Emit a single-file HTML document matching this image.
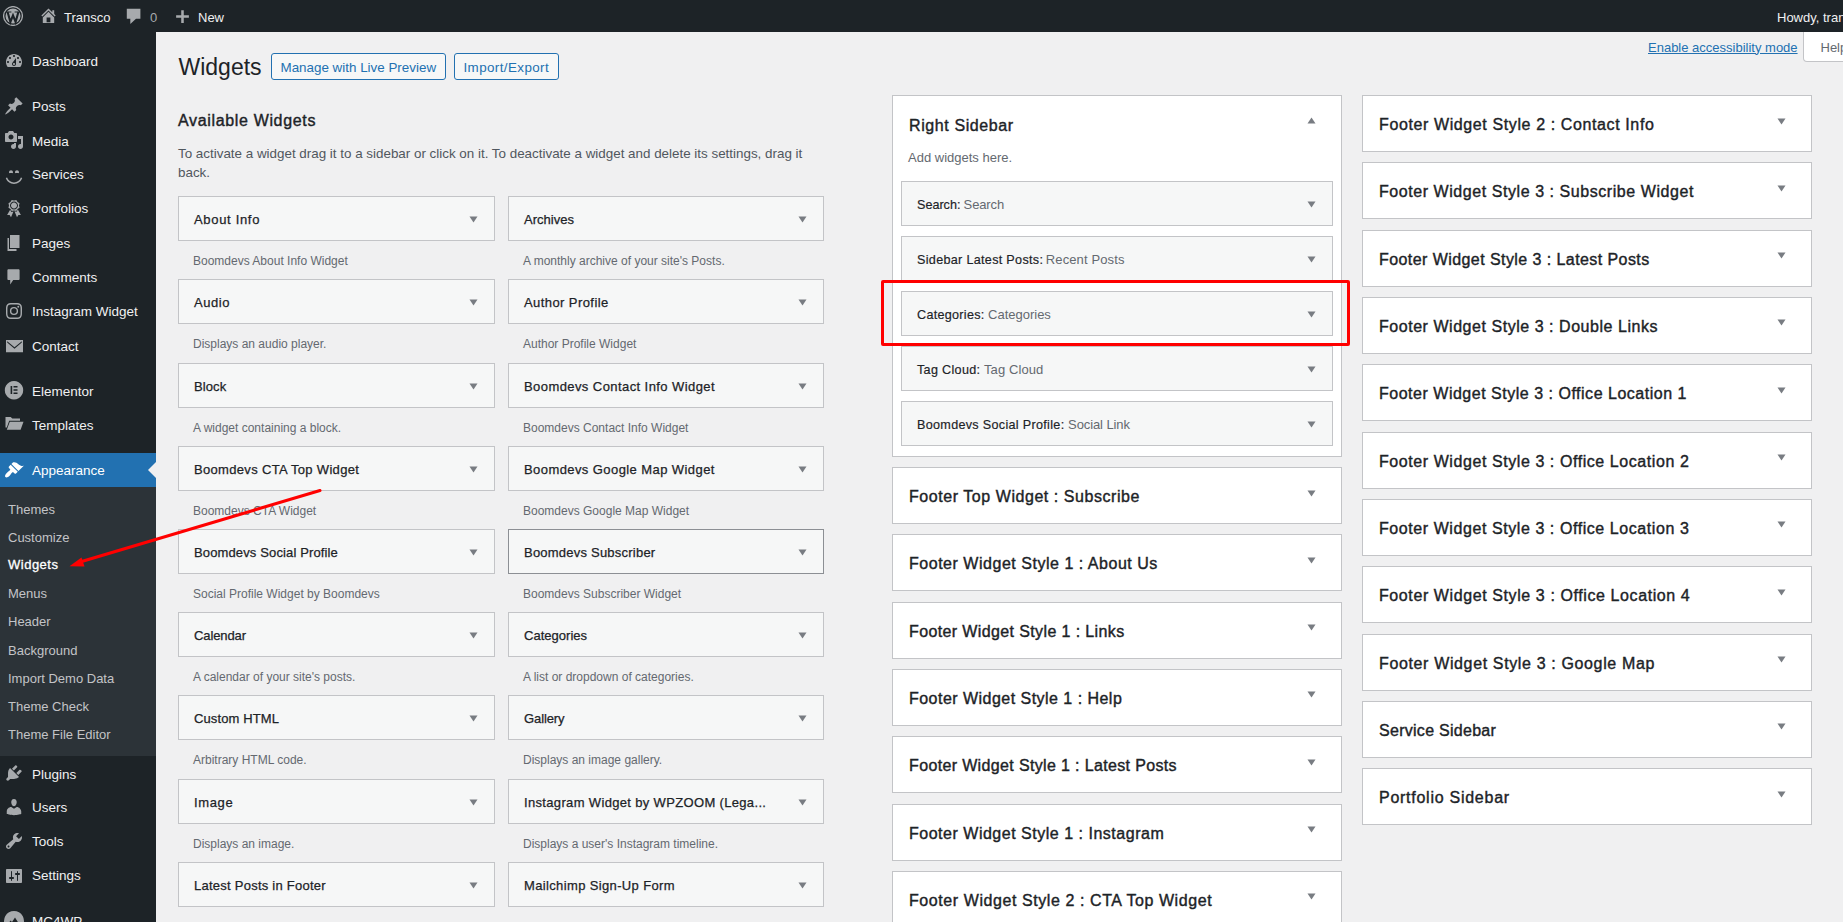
<!DOCTYPE html>
<html><head><meta charset="utf-8"><title>Widgets</title>
<style>
html,body{margin:0;padding:0;}
body{width:1843px;height:922px;overflow:hidden;position:relative;background:#f0f0f1;font-family:'Liberation Sans', sans-serif;}
.t{position:absolute;white-space:nowrap;}
.b{position:absolute;box-sizing:content-box;}
.btn{border:1px solid #2271b1;border-radius:3px;background:#f6f7f7;}
</style></head><body>
<div class="b" style="left:0px;top:0px;width:1843px;height:32px;background:#1d2327;"></div>
<div class="b" style="left:0px;top:32px;width:156px;height:890px;background:#1d2327;"></div>
<div class="b" style="left:0px;top:453px;width:156px;height:34px;background:#2271b1;"></div>
<div class="b" style="left:0px;top:487px;width:156px;height:269px;background:#2c3338;"></div>
<svg class="b" style="left:3px;top:6px" width="20" height="20" viewBox="0 0 20 20"><circle cx="10" cy="10" r="9.4" fill="none" stroke="#a7aaad" stroke-width="1.3"/><circle cx="10" cy="10" r="7.5" fill="#a7aaad"/><polyline points="4.6,6.0 7.4,16.0 10,9.4 12.6,16.0 15.4,6.0" fill="none" stroke="#1d2327" stroke-width="2.1" stroke-linejoin="miter"/><path d="M3.2 5.6 H8.4 V6.4 H3.2Z M11.6 5.6 H16.8 V6.4 H11.6Z" fill="#1d2327"/></svg>
<svg class="b" style="left:38.5px;top:6px" width="19" height="19" viewBox="0 0 20 20" fill="#a7aaad"><path fill-rule="evenodd" d="M16 8.5l1.53 1.53-1.06 1.06L10 4.62l-6.47 6.47-1.06-1.06L10 2.5l4 4v-2h2v4zm-6-2.46l6 5.99V18H4v-5.97zM12 17v-5H8v5h4z"/></svg>
<div class="t" style="left:64.0px;top:11.3px;font-size:13px;line-height:13px;color:#f0f0f1;font-weight:normal;">Transco</div>
<svg class="b" style="left:126px;top:8px" width="16" height="16" viewBox="0 0 20 20" fill="#a7aaad"><path d="M1 1 H18 V13.5 H12.5 L5.4 20 V13.5 H1Z"/></svg>
<div class="t" style="left:150.0px;top:11.3px;font-size:13px;line-height:13px;color:#a7aaad;font-weight:normal;">0</div>
<svg class="b" style="left:175px;top:9px" width="15" height="15" viewBox="0 0 20 20" fill="#a7aaad"><path d="M8.3 1.5 H11.7 V8.3 H18.5 V11.7 H11.7 V18.5 H8.3 V11.7 H1.5 V8.3 H8.3Z"/></svg>
<div class="t" style="left:198.0px;top:11.3px;font-size:13px;line-height:13px;color:#f0f0f1;font-weight:normal;">New</div>
<div class="t" style="left:1777.0px;top:11.3px;font-size:13px;line-height:13px;color:#f0f0f1;font-weight:normal;white-space:nowrap">Howdy, transco</div>
<div class="t" style="left:32.0px;top:55.3px;font-size:13.5px;line-height:13.5px;color:#f0f0f1;font-weight:normal;white-space:nowrap">Dashboard</div>
<div class="t" style="left:32.0px;top:100.4px;font-size:13.5px;line-height:13.5px;color:#f0f0f1;font-weight:normal;white-space:nowrap">Posts</div>
<div class="t" style="left:32.0px;top:134.5px;font-size:13.5px;line-height:13.5px;color:#f0f0f1;font-weight:normal;white-space:nowrap">Media</div>
<div class="t" style="left:32.0px;top:168.3px;font-size:13.5px;line-height:13.5px;color:#f0f0f1;font-weight:normal;white-space:nowrap">Services</div>
<div class="t" style="left:32.0px;top:202.4px;font-size:13.5px;line-height:13.5px;color:#f0f0f1;font-weight:normal;white-space:nowrap">Portfolios</div>
<div class="t" style="left:32.0px;top:236.5px;font-size:13.5px;line-height:13.5px;color:#f0f0f1;font-weight:normal;white-space:nowrap">Pages</div>
<div class="t" style="left:32.0px;top:271.1px;font-size:13.5px;line-height:13.5px;color:#f0f0f1;font-weight:normal;white-space:nowrap">Comments</div>
<div class="t" style="left:32.0px;top:305.3px;font-size:13.5px;line-height:13.5px;color:#f0f0f1;font-weight:normal;white-space:nowrap">Instagram Widget</div>
<div class="t" style="left:32.0px;top:339.6px;font-size:13.5px;line-height:13.5px;color:#f0f0f1;font-weight:normal;white-space:nowrap">Contact</div>
<div class="t" style="left:32.0px;top:384.5px;font-size:13.5px;line-height:13.5px;color:#f0f0f1;font-weight:normal;white-space:nowrap">Elementor</div>
<div class="t" style="left:32.0px;top:419.4px;font-size:13.5px;line-height:13.5px;color:#f0f0f1;font-weight:normal;white-space:nowrap">Templates</div>
<div class="t" style="left:32.0px;top:464.2px;font-size:13.5px;line-height:13.5px;color:#ffffff;font-weight:normal;white-space:nowrap">Appearance</div>
<div class="t" style="left:32.0px;top:767.5px;font-size:13.5px;line-height:13.5px;color:#f0f0f1;font-weight:normal;white-space:nowrap">Plugins</div>
<div class="t" style="left:32.0px;top:801.1px;font-size:13.5px;line-height:13.5px;color:#f0f0f1;font-weight:normal;white-space:nowrap">Users</div>
<div class="t" style="left:32.0px;top:835.2px;font-size:13.5px;line-height:13.5px;color:#f0f0f1;font-weight:normal;white-space:nowrap">Tools</div>
<div class="t" style="left:32.0px;top:869.1px;font-size:13.5px;line-height:13.5px;color:#f0f0f1;font-weight:normal;white-space:nowrap">Settings</div>
<div class="t" style="left:32.0px;top:914.6px;font-size:13.5px;line-height:13.5px;color:#f0f0f1;font-weight:normal;white-space:nowrap">MC4WP</div>
<div class="t" style="left:8.0px;top:502.7px;font-size:13px;line-height:13px;color:#c3c4c7;font-weight:normal;white-space:nowrap">Themes</div>
<div class="t" style="left:8.0px;top:530.5px;font-size:13px;line-height:13px;color:#c3c4c7;font-weight:normal;white-space:nowrap">Customize</div>
<div class="t" style="left:8.0px;top:558.4px;font-size:13px;line-height:13px;color:#ffffff;font-weight:normal;-webkit-text-stroke:0.3px #fff;letter-spacing:0.5px;">Widgets</div>
<div class="t" style="left:8.0px;top:587.3px;font-size:13px;line-height:13px;color:#c3c4c7;font-weight:normal;white-space:nowrap">Menus</div>
<div class="t" style="left:8.0px;top:615.0px;font-size:13px;line-height:13px;color:#c3c4c7;font-weight:normal;white-space:nowrap">Header</div>
<div class="t" style="left:8.0px;top:643.7px;font-size:13px;line-height:13px;color:#c3c4c7;font-weight:normal;white-space:nowrap">Background</div>
<div class="t" style="left:8.0px;top:671.9px;font-size:13px;line-height:13px;color:#c3c4c7;font-weight:normal;white-space:nowrap">Import Demo Data</div>
<div class="t" style="left:8.0px;top:699.6px;font-size:13px;line-height:13px;color:#c3c4c7;font-weight:normal;white-space:nowrap">Theme Check</div>
<div class="t" style="left:8.0px;top:728.4px;font-size:13px;line-height:13px;color:#c3c4c7;font-weight:normal;white-space:nowrap">Theme File Editor</div>
<svg class="b" style="left:148px;top:462px" width="8" height="16" viewBox="0 0 8 16"><path d="M8 0 L0 8 L8 16Z" fill="#f0f0f1"/></svg>
<svg class="b" style="left:4px;top:51px" width="20" height="20" viewBox="0 0 20 20"><path fill="#a7aaad" fill-rule="evenodd" d="M3.76 16h12.48c1.1-1.37 1.76-3.11 1.76-5 0-4.42-3.58-8-8-8s-8 3.58-8 8c0 1.89.66 3.630 1.76 5zM10 4c.55 0 1 .45 1 1s-.45 1-1 1-1-.45-1-1 .45-1 1-1zM6 6c.55 0 1 .45 1 1s-.45 1-1 1-1-.45-1-1 .45-1 1-1zm8 0c.55 0 1 .45 1 1s-.45 1-1 1-1-.45-1-1 .45-1 1-1zm-5.37 5.55L12 7v6c0 1.1-.9 2-2 2s-2-.9-2-2c0-.57.24-1.08.63-1.45zM4 10c.55 0 1 .45 1 1s-.45 1-1 1-1-.45-1-1 .45-1 1-1zm12 0c.55 0 1 .45 1 1s-.45 1-1 1-1-.45-1-1 .45-1 1-1zm-5 3c0-.55-.45-1-1-1s-1 .45-1 1 .45 1 1 1 1-.45 1-1z"/></svg>
<svg class="b" style="left:4px;top:96px" width="20" height="20" viewBox="0 0 20 20"><path fill="#a7aaad" d="M10.44 3.02l1.82-1.82 6.36 6.35-1.830 1.82c-1.05-.68-2.48-.57-3.41.36l-.75.75c-.92.93-1.04 2.35-.35 3.41l-1.83 1.82-2.41-2.41-2.8 2.79c-.42.42-3.38 2.71-3.8 2.29s1.86-3.39 2.28-3.81l2.79-2.79L4.1 9.36l1.83-1.82c1.05.69 2.48.57 3.4-.36l.75-.75c.93-.92 1.05-2.35.36-3.41z"/></svg>
<svg class="b" style="left:4px;top:130px" width="20" height="20" viewBox="0 0 20 20"><path fill="#a7aaad" fill-rule="evenodd" d="M13 11V4c0-.55-.45-1-1-1h-1.67L9 1H5L3.67 3H2c-.55 0-1 .45-1 1v7c0 .55.45 1 1 1h10c.55 0 1-.45 1-1zM7 4.5c1.38 0 2.5 1.12 2.5 2.5S8.38 9.5 7 9.5 4.5 8.38 4.5 7 5.62 4.5 7 4.5zM14 6h5v10.5c0 1.38-1.12 2.5-2.5 2.5S14 17.880 14 16.5s1.12-2.5 2.5-2.5c.17 0 .34.02.5.05V9h-3V6zm-4 8.05V13h2v3.5c0 1.38-1.12 2.5-2.5 2.5S7 17.88 7 16.5 8.12 14 9.5 14c.17 0 .34.02.5.05z"/></svg>
<svg class="b" style="left:4px;top:165px" width="20" height="20" viewBox="0 0 20 20"><path fill="#a7aaad" d="M7 5.2c1.1 0 2 .89 2 2 0 .37-.11.71-.28 1C8.72 8.2 8 8 7 8s-1.72.2-1.72.2c-.17-.29-.28-.63-.28-1 0-1.110.9-2 2-2zm6 0c1.11 0 2 .89 2 2 0 .37-.11.71-.28 1 0 0-.72-.2-1.72-.2s-1.72.2-1.72.2c-.17-.29-.28-.63-.28-1 0-1.11.89-2 2-2zm-3 13.7c3.72 0 7.03-2.36 8.23-5.88l-1.32-.46C15.9 15.52 13.12 17.5 10 17.5s-5.9-1.98-6.91-4.94l-1.32.46c1.2 3.52 4.51 5.88 8.23 5.88z"/></svg>
<svg class="b" style="left:4px;top:198px" width="20" height="20" viewBox="0 0 20 20"><path fill="#a7aaad" fill-rule="evenodd" d="M4.46 5.16L5 7.46l-.54 2.29 2.01 1.24L7.7 13l2.3-.54 2.3.54 1.23-2.01 2.01-1.24L15 7.46l.54-2.3-2-1.24-1.24-2.01-2.3.55-2.29-.54-1.25 2zm5.55 6.34c-2.21 0-4.01-1.79-4.01-4 0-2.2 1.8-4 4.01-4 2.2 0 4 1.8 4 4 0 2.21-1.8 4-4 4zm-.02-1C8.33 10.5 7 9.16 7 7.5c0-1.65 1.33-3 2.99-3S13 5.85 13 7.5c0 1.66-1.35 3-3.01 3zm3.84 1.1l-1.28 2.24-2.08-.47L13 19.2l1.4-2.2h2.5zm-7.7.07l1.25 2.25 2.13-.51L7 19.2 5.6 17H3.1z"/></svg>
<svg class="b" style="left:3px;top:232.5px" width="20" height="20" viewBox="0 0 20 20"><path fill="#a7aaad" d="M7 15V2h9.5v13H7zm-1 1h7.5v2H4.5V5H6v11z"/></svg>
<svg class="b" style="left:4px;top:267px" width="20" height="20" viewBox="0 0 20 20"><path fill="#a7aaad" d="M4.5 2.2h10c.6 0 1.1.5 1.1 1.1v8.6c0 .6-.5 1.1-1.1 1.1H9.2L6.2 17.6V13H4.5c-.6 0-1.1-.5-1.1-1.1V3.3c0-.6.5-1.1 1.1-1.1z"/></svg>
<svg class="b" style="left:4px;top:301px" width="20" height="20" viewBox="0 0 20 20"><path fill="#a7aaad" d="M12.67 10A2.67 2.67 0 1 0 10 12.67 2.68 2.68 0 0 0 12.67 10zm1.43 0A4.1 4.1 0 1 1 10 5.9a4.09 4.09 0 0 1 4.1 4.1zm1.13-4.27a.96.96 0 1 1-1-1 1 1 0 0 1 1 1zM10 3.44c-1.17 0-3.67-.1-4.72.32a2.67 2.67 0 0 0-1.52 1.520c-.42 1-.32 3.55-.32 4.72s-.1 3.67.32 4.72a2.74 2.74 0 0 0 1.52 1.52c1 .42 3.55.32 4.72.32s3.67.1 4.72-.32a2.83 2.83 0 0 0 1.52-1.52c.42-1.05.32-3.55.32-4.72s.1-3.67-.32-4.72a2.74 2.74 0 0 0-1.52-1.52c-1.05-.42-3.55-.32-4.72-.32zM18 10c0 1.1 0 2.2-.05 3.3a4.84 4.84 0 0 1-1.29 3.36A4.8 4.8 0 0 1 13.3 18H6.7a4.84 4.84 0 0 1-3.36-1.29 4.84 4.84 0 0 1-1.29-3.36C2 12.2 2 11.1 2 10V6.7a4.84 4.84 0 0 1 1.34-3.36A4.8 4.8 0 0 1 6.7 2.05C7.8 2 8.9 2 10 2h3.3a4.84 4.84 0 0 1 3.36 1.29A4.8 4.8 0 0 1 18 6.7V10z"/></svg>
<svg class="b" style="left:4px;top:336px" width="20" height="20" viewBox="0 0 20 20"><path fill="#a7aaad" fill-rule="evenodd" d="M2 4h17v12.3H2z M3.2 5.2 L10.5 11.2 L17.8 5.2 L17.8 6.6 L10.5 12.8 L3.2 6.6Z"/></svg>
<svg class="b" style="left:4px;top:380px" width="20" height="20" viewBox="0 0 20 20"><path fill="#a7aaad" fill-rule="evenodd" d="M10 1a9.2 9.2 0 1 0 0.001 0z M6.6 5.9h1.6v8.2H6.6z M9.5 5.9h4v1.6h-4z M9.5 9.2h4v1.6h-4z M9.5 12.5h4v1.6h-4z"/></svg>
<svg class="b" style="left:4px;top:412px" width="20" height="20" viewBox="0 0 20 20"><path fill="#a7aaad" d="M1.5 5h5.2l1.6 1.6H16v2.2H5.2L2.8 15.5H1.5z M5.8 9.7H19.5L16.6 17.8H2.8z"/></svg>
<svg class="b" style="left:4px;top:460px" width="20" height="20" viewBox="0 0 20 20"><path fill="#ffffff" d="M14.48 11.06L7.41 3.99l1.5-1.5c.5-.56 2.3-.47 3.51.32 1.21.8 1.43 1.28 2.91 2.1 1.18.64 2.45 1.26 4.45.85zm-.71.71L6.7 4.7 4.93 6.47c-.39.39-.39 1.02 0 1.41l1.06 1.06c.39.39.39 1.03 0 1.42-.6.6-1.43 1.11-2.21 1.690-.35.26-.7.53-1.01.84C1.43 14.230.4 16.08 1.4 17.070c.99 1 2.84-.03 4.18-1.36.31-.31.58-.66.85-1.02.57-.78 1.08-1.61 1.69-2.21.39-.39 1.02-.39 1.41 0l1.06 1.06c.39.39 1.02.39 1.41 0z"/></svg>
<svg class="b" style="left:4px;top:763px" width="20" height="20" viewBox="0 0 20 20"><path fill="#a7aaad" d="M13.11 4.36L9.87 7.6 8 5.73l3.24-3.24c.35-.34 1.05-.2 1.56.32.52.51.66 1.21.31 1.55zm-8 1.77l.91-1.12 9.01 9.01-1.19.84c-.71.71-2.63 1.16-3.82 1.16H6.14L4.9 17.26c-.59.59-1.54.59-2.12 0-.59-.58-.59-1.53 0-2.12l1.24-1.24v-3.88c0-1.13.4-3.19 1.09-3.89zm7.26 3.97l3.24-3.24c.34-.35 1.04-.21 1.55.31.52.51.66 1.21.31 1.55l-3.24 3.25z"/></svg>
<svg class="b" style="left:4px;top:797px" width="20" height="20" viewBox="0 0 20 20"><path fill="#a7aaad" d="M10 9.25c-2.27 0-2.73-3.44-2.73-3.44C7 4.02 7.82 2 9.97 2c2.16 0 2.98 2.02 2.71 3.81 0 0-.41 3.44-2.68 3.44zm0 2.57L12.72 10c2.39 0 4.52 2.33 4.52 4.53v2.49s-3.65 1.13-7.24 1.13c-3.65 0-7.24-1.13-7.24-1.13v-2.49c0-2.25 1.94-4.48 4.47-4.48z"/></svg>
<svg class="b" style="left:4px;top:831px" width="20" height="20" viewBox="0 0 20 20"><path fill="#a7aaad" fill-rule="evenodd" d="M16.68 9.77c-1.34 1.34-3.3 1.67-4.95.99l-5.41 6.52c-.99.99-2.59.99-3.58 0s-.99-2.59 0-3.57l6.52-5.42c-.68-1.65-.35-3.61.99-4.95 1.28-1.28 3.12-1.62 4.72-1.06l-2.89 2.89 2.82 2.82 2.86-2.87c.53 1.58.18 3.39-1.08 4.65zM3.81 16.21c.4.39 1.04.39 1.43 0 .4-.4.4-1.04 0-1.43-.39-.4-1.03-.4-1.43 0-.39.39-.39 1.03 0 1.43z"/></svg>
<svg class="b" style="left:4px;top:866px" width="20" height="20" viewBox="0 0 20 20"><path fill="#a7aaad" fill-rule="evenodd" d="M18 16V4c0-.55-.45-1-1-1H3c-.55 0-1 .45-1 1v12c0 .55.45 1 1 1h14c.55 0 1-.45 1-1zM8 11h1c.55 0 1 .45 1 1s-.45 1-1 1H8v1.5c0 .28-.22.5-.5.5s-.5-.22-.5-.5V13H6c-.55 0-1-.45-1-1s.45-1 1-1h1V5.5c0-.28.22-.5.5-.5s.5.22.5.5V11zm5-2h-1c-.55 0-1-.45-1-1s.45-1 1-1h1V5.5c0-.28.22-.5.5-.5s.5.22.5.5V7h1c.55 0 1 .45 1 1s-.45 1-1 1h-1v5.5c0 .28-.22.5-.5.5s-.5-.22-.5-.5V9z"/></svg>
<svg class="b" style="left:3.5px;top:910.5px" width="20" height="20" viewBox="0 0 20 20"><path fill="#a7aaad" fill-rule="evenodd" d="M10 0a10 10 0 1 0 0.001 0z M4.5 12.5 L6.5 9.5 L8 11 L11 6.5 L14.5 12 L14.5 17 L4.5 17Z"/></svg>
<div class="t" style="left:178.5px;top:55.7px;font-size:23px;line-height:23px;color:#1d2327;font-weight:normal;">Widgets</div>
<div class="b btn" style="left:271px;top:53px;width:173px;height:25px;"></div>
<div class="t" style="left:280.5px;top:60.7px;font-size:13.4px;line-height:13.4px;color:#2271b1;font-weight:normal;white-space:nowrap">Manage with Live Preview</div>
<div class="b btn" style="left:454px;top:53px;width:103px;height:25px;"></div>
<div class="t" style="left:463.5px;top:60.7px;font-size:13.4px;line-height:13.4px;color:#2271b1;font-weight:normal;letter-spacing:0.4px;">Import/Export</div>
<div class="t" style="left:1648.0px;top:40.5px;font-size:13px;line-height:13px;color:#2271b1;font-weight:normal;white-space:nowrap;text-decoration:underline">Enable accessibility mode</div>
<div class="b" style="left:1803px;top:32px;width:60px;height:29px;background:#fff;border:1px solid #c3c4c7;border-top:none;border-radius:0 0 0 4px"></div>
<div class="t" style="left:1820.5px;top:40.5px;font-size:13px;line-height:13px;color:#646970;font-weight:normal;">Help</div>
<div class="t" style="left:178.0px;top:113.0px;font-size:16px;line-height:16px;color:#1d2327;font-weight:normal;-webkit-text-stroke:0.4px #1d2327;letter-spacing:0.656px;">Available Widgets</div>
<div class="t" style="left:178.0px;top:146.5px;font-size:13.4px;line-height:13.4px;color:#50575e;font-weight:normal;white-space:nowrap">To activate a widget drag it to a sidebar or click on it. To deactivate a widget and delete its settings, drag it</div>
<div class="t" style="left:178.0px;top:165.5px;font-size:13.4px;line-height:13.4px;color:#50575e;font-weight:normal;">back.</div>
<div class="b" style="left:178px;top:196px;width:315px;height:43px;background:#f6f7f7;border:1px solid #c3c4c7;"></div>
<div class="t" style="left:194.0px;top:213.3px;font-size:13px;line-height:13px;color:#1d2327;font-weight:normal;-webkit-text-stroke:0.25px #1d2327;letter-spacing:0.678px;">About Info</div>
<svg class="b" style="left:468.5px;top:215.5px" width="9" height="7" viewBox="0 0 9 7"><path d="M0.5 0.5H8.5L4.5 6.5Z" fill="#787c82"/></svg>
<div class="t" style="left:193.0px;top:255.0px;font-size:12px;line-height:12px;color:#646970;font-weight:normal;white-space:nowrap">Boomdevs About Info Widget</div>
<div class="b" style="left:178px;top:279px;width:315px;height:43px;background:#f6f7f7;border:1px solid #c3c4c7;"></div>
<div class="t" style="left:194.0px;top:296.3px;font-size:13px;line-height:13px;color:#1d2327;font-weight:normal;-webkit-text-stroke:0.25px #1d2327;letter-spacing:0.575px;">Audio</div>
<svg class="b" style="left:468.5px;top:298.5px" width="9" height="7" viewBox="0 0 9 7"><path d="M0.5 0.5H8.5L4.5 6.5Z" fill="#787c82"/></svg>
<div class="t" style="left:193.0px;top:338.0px;font-size:12px;line-height:12px;color:#646970;font-weight:normal;white-space:nowrap">Displays an audio player.</div>
<div class="b" style="left:178px;top:363px;width:315px;height:43px;background:#f6f7f7;border:1px solid #c3c4c7;"></div>
<div class="t" style="left:194.0px;top:380.3px;font-size:13px;line-height:13px;color:#1d2327;font-weight:normal;-webkit-text-stroke:0.25px #1d2327;letter-spacing:0.1px;">Block</div>
<svg class="b" style="left:468.5px;top:382.5px" width="9" height="7" viewBox="0 0 9 7"><path d="M0.5 0.5H8.5L4.5 6.5Z" fill="#787c82"/></svg>
<div class="t" style="left:193.0px;top:422.0px;font-size:12px;line-height:12px;color:#646970;font-weight:normal;white-space:nowrap">A widget containing a block.</div>
<div class="b" style="left:178px;top:446px;width:315px;height:43px;background:#f6f7f7;border:1px solid #c3c4c7;"></div>
<div class="t" style="left:194.0px;top:463.3px;font-size:13px;line-height:13px;color:#1d2327;font-weight:normal;-webkit-text-stroke:0.25px #1d2327;letter-spacing:0.323px;">Boomdevs CTA Top Widget</div>
<svg class="b" style="left:468.5px;top:465.5px" width="9" height="7" viewBox="0 0 9 7"><path d="M0.5 0.5H8.5L4.5 6.5Z" fill="#787c82"/></svg>
<div class="t" style="left:193.0px;top:505.0px;font-size:12px;line-height:12px;color:#646970;font-weight:normal;white-space:nowrap">Boomdevs CTA Widget</div>
<div class="b" style="left:178px;top:529px;width:315px;height:43px;background:#f6f7f7;border:1px solid #c3c4c7;"></div>
<div class="t" style="left:194.0px;top:546.3px;font-size:13px;line-height:13px;color:#1d2327;font-weight:normal;-webkit-text-stroke:0.25px #1d2327;letter-spacing:0.132px;">Boomdevs Social Profile</div>
<svg class="b" style="left:468.5px;top:548.5px" width="9" height="7" viewBox="0 0 9 7"><path d="M0.5 0.5H8.5L4.5 6.5Z" fill="#787c82"/></svg>
<div class="t" style="left:193.0px;top:588.0px;font-size:12px;line-height:12px;color:#646970;font-weight:normal;white-space:nowrap">Social Profile Widget by Boomdevs</div>
<div class="b" style="left:178px;top:612px;width:315px;height:43px;background:#f6f7f7;border:1px solid #c3c4c7;"></div>
<div class="t" style="left:194.0px;top:629.3px;font-size:13px;line-height:13px;color:#1d2327;font-weight:normal;-webkit-text-stroke:0.25px #1d2327;letter-spacing:-0.1px;">Calendar</div>
<svg class="b" style="left:468.5px;top:631.5px" width="9" height="7" viewBox="0 0 9 7"><path d="M0.5 0.5H8.5L4.5 6.5Z" fill="#787c82"/></svg>
<div class="t" style="left:193.0px;top:671.0px;font-size:12px;line-height:12px;color:#646970;font-weight:normal;white-space:nowrap">A calendar of your site&#39;s posts.</div>
<div class="b" style="left:178px;top:695px;width:315px;height:43px;background:#f6f7f7;border:1px solid #c3c4c7;"></div>
<div class="t" style="left:194.0px;top:712.3px;font-size:13px;line-height:13px;color:#1d2327;font-weight:normal;-webkit-text-stroke:0.25px #1d2327;letter-spacing:0.11px;">Custom HTML</div>
<svg class="b" style="left:468.5px;top:714.5px" width="9" height="7" viewBox="0 0 9 7"><path d="M0.5 0.5H8.5L4.5 6.5Z" fill="#787c82"/></svg>
<div class="t" style="left:193.0px;top:754.0px;font-size:12px;line-height:12px;color:#646970;font-weight:normal;white-space:nowrap">Arbitrary HTML code.</div>
<div class="b" style="left:178px;top:779px;width:315px;height:43px;background:#f6f7f7;border:1px solid #c3c4c7;"></div>
<div class="t" style="left:194.0px;top:796.3px;font-size:13px;line-height:13px;color:#1d2327;font-weight:normal;-webkit-text-stroke:0.25px #1d2327;letter-spacing:0.625px;">Image</div>
<svg class="b" style="left:468.5px;top:798.5px" width="9" height="7" viewBox="0 0 9 7"><path d="M0.5 0.5H8.5L4.5 6.5Z" fill="#787c82"/></svg>
<div class="t" style="left:193.0px;top:838.0px;font-size:12px;line-height:12px;color:#646970;font-weight:normal;white-space:nowrap">Displays an image.</div>
<div class="b" style="left:178px;top:862px;width:315px;height:43px;background:#f6f7f7;border:1px solid #c3c4c7;"></div>
<div class="t" style="left:194.0px;top:879.3px;font-size:13px;line-height:13px;color:#1d2327;font-weight:normal;-webkit-text-stroke:0.25px #1d2327;letter-spacing:0.248px;">Latest Posts in Footer</div>
<svg class="b" style="left:468.5px;top:881.5px" width="9" height="7" viewBox="0 0 9 7"><path d="M0.5 0.5H8.5L4.5 6.5Z" fill="#787c82"/></svg>
<div class="t" style="left:193.0px;top:921.0px;font-size:12px;line-height:12px;color:#646970;font-weight:normal;white-space:nowrap">Displays latest posts in footer.</div>
<div class="b" style="left:508px;top:196px;width:314px;height:43px;background:#f6f7f7;border:1px solid #c3c4c7;"></div>
<div class="t" style="left:524.0px;top:213.3px;font-size:13px;line-height:13px;color:#1d2327;font-weight:normal;-webkit-text-stroke:0.25px #1d2327;letter-spacing:0.029px;">Archives</div>
<svg class="b" style="left:797.5px;top:215.5px" width="9" height="7" viewBox="0 0 9 7"><path d="M0.5 0.5H8.5L4.5 6.5Z" fill="#787c82"/></svg>
<div class="t" style="left:523.0px;top:255.0px;font-size:12px;line-height:12px;color:#646970;font-weight:normal;white-space:nowrap">A monthly archive of your site&#39;s Posts.</div>
<div class="b" style="left:508px;top:279px;width:314px;height:43px;background:#f6f7f7;border:1px solid #c3c4c7;"></div>
<div class="t" style="left:524.0px;top:296.3px;font-size:13px;line-height:13px;color:#1d2327;font-weight:normal;-webkit-text-stroke:0.25px #1d2327;letter-spacing:0.423px;">Author Profile</div>
<svg class="b" style="left:797.5px;top:298.5px" width="9" height="7" viewBox="0 0 9 7"><path d="M0.5 0.5H8.5L4.5 6.5Z" fill="#787c82"/></svg>
<div class="t" style="left:523.0px;top:338.0px;font-size:12px;line-height:12px;color:#646970;font-weight:normal;white-space:nowrap">Author Profile Widget</div>
<div class="b" style="left:508px;top:363px;width:314px;height:43px;background:#f6f7f7;border:1px solid #c3c4c7;"></div>
<div class="t" style="left:524.0px;top:380.3px;font-size:13px;line-height:13px;color:#1d2327;font-weight:normal;-webkit-text-stroke:0.25px #1d2327;letter-spacing:0.422px;">Boomdevs Contact Info Widget</div>
<svg class="b" style="left:797.5px;top:382.5px" width="9" height="7" viewBox="0 0 9 7"><path d="M0.5 0.5H8.5L4.5 6.5Z" fill="#787c82"/></svg>
<div class="t" style="left:523.0px;top:422.0px;font-size:12px;line-height:12px;color:#646970;font-weight:normal;white-space:nowrap">Boomdevs Contact Info Widget</div>
<div class="b" style="left:508px;top:446px;width:314px;height:43px;background:#f6f7f7;border:1px solid #c3c4c7;"></div>
<div class="t" style="left:524.0px;top:463.3px;font-size:13px;line-height:13px;color:#1d2327;font-weight:normal;-webkit-text-stroke:0.25px #1d2327;letter-spacing:0.42px;">Boomdevs Google Map Widget</div>
<svg class="b" style="left:797.5px;top:465.5px" width="9" height="7" viewBox="0 0 9 7"><path d="M0.5 0.5H8.5L4.5 6.5Z" fill="#787c82"/></svg>
<div class="t" style="left:523.0px;top:505.0px;font-size:12px;line-height:12px;color:#646970;font-weight:normal;white-space:nowrap">Boomdevs Google Map Widget</div>
<div class="b" style="left:508px;top:529px;width:314px;height:43px;background:#f6f7f7;border:1px solid #8c8f94;"></div>
<div class="t" style="left:524.0px;top:546.3px;font-size:13px;line-height:13px;color:#1d2327;font-weight:normal;-webkit-text-stroke:0.25px #1d2327;letter-spacing:0.222px;">Boomdevs Subscriber</div>
<svg class="b" style="left:797.5px;top:548.5px" width="9" height="7" viewBox="0 0 9 7"><path d="M0.5 0.5H8.5L4.5 6.5Z" fill="#787c82"/></svg>
<div class="t" style="left:523.0px;top:588.0px;font-size:12px;line-height:12px;color:#646970;font-weight:normal;white-space:nowrap">Boomdevs Subscriber Widget</div>
<div class="b" style="left:508px;top:612px;width:314px;height:43px;background:#f6f7f7;border:1px solid #c3c4c7;"></div>
<div class="t" style="left:524.0px;top:629.3px;font-size:13px;line-height:13px;color:#1d2327;font-weight:normal;-webkit-text-stroke:0.25px #1d2327;letter-spacing:0.022px;">Categories</div>
<svg class="b" style="left:797.5px;top:631.5px" width="9" height="7" viewBox="0 0 9 7"><path d="M0.5 0.5H8.5L4.5 6.5Z" fill="#787c82"/></svg>
<div class="t" style="left:523.0px;top:671.0px;font-size:12px;line-height:12px;color:#646970;font-weight:normal;white-space:nowrap">A list or dropdown of categories.</div>
<div class="b" style="left:508px;top:695px;width:314px;height:43px;background:#f6f7f7;border:1px solid #c3c4c7;"></div>
<div class="t" style="left:524.0px;top:712.3px;font-size:13px;line-height:13px;color:#1d2327;font-weight:normal;-webkit-text-stroke:0.25px #1d2327;letter-spacing:-0.1px;">Gallery</div>
<svg class="b" style="left:797.5px;top:714.5px" width="9" height="7" viewBox="0 0 9 7"><path d="M0.5 0.5H8.5L4.5 6.5Z" fill="#787c82"/></svg>
<div class="t" style="left:523.0px;top:754.0px;font-size:12px;line-height:12px;color:#646970;font-weight:normal;white-space:nowrap">Displays an image gallery.</div>
<div class="b" style="left:508px;top:779px;width:314px;height:43px;background:#f6f7f7;border:1px solid #c3c4c7;"></div>
<div class="t" style="left:524.0px;top:796.3px;font-size:13px;line-height:13px;color:#1d2327;font-weight:normal;-webkit-text-stroke:0.25px #1d2327;letter-spacing:0.338px;">Instagram Widget by WPZOOM (Lega...</div>
<svg class="b" style="left:797.5px;top:798.5px" width="9" height="7" viewBox="0 0 9 7"><path d="M0.5 0.5H8.5L4.5 6.5Z" fill="#787c82"/></svg>
<div class="t" style="left:523.0px;top:838.0px;font-size:12px;line-height:12px;color:#646970;font-weight:normal;white-space:nowrap">Displays a user&#39;s Instagram timeline.</div>
<div class="b" style="left:508px;top:862px;width:314px;height:43px;background:#f6f7f7;border:1px solid #c3c4c7;"></div>
<div class="t" style="left:524.0px;top:879.3px;font-size:13px;line-height:13px;color:#1d2327;font-weight:normal;-webkit-text-stroke:0.25px #1d2327;letter-spacing:0.357px;">Mailchimp Sign-Up Form</div>
<svg class="b" style="left:797.5px;top:881.5px" width="9" height="7" viewBox="0 0 9 7"><path d="M0.5 0.5H8.5L4.5 6.5Z" fill="#787c82"/></svg>
<div class="t" style="left:523.0px;top:921.0px;font-size:12px;line-height:12px;color:#646970;font-weight:normal;white-space:nowrap">Mailchimp sign-up form.</div>
<div class="b" style="left:892px;top:95px;width:448px;height:360px;background:#ffffff;border:1px solid #c3c4c7;"></div>
<div class="t" style="left:909.0px;top:117.8px;font-size:16px;line-height:16px;color:#1d2327;font-weight:normal;-webkit-text-stroke:0.4px #1d2327;letter-spacing:0.6px;">Right Sidebar</div>
<svg class="b" style="left:1307px;top:116.5px" width="9" height="7" viewBox="0 0 9 7"><path d="M0.5 6.5H8.5L4.5 0.5Z" fill="#787c82"/></svg>
<div class="t" style="left:908.0px;top:151.0px;font-size:13px;line-height:13px;color:#646970;font-weight:normal;">Add widgets here.</div>
<div class="b" style="left:901px;top:181px;width:430px;height:43px;background:#f6f7f7;border:1px solid #c3c4c7;"></div>
<div class="t" style="left:917.0px;top:198.6px;font-size:12.6px;line-height:12.6px;color:#1d2327;font-weight:normal;-webkit-text-stroke:0.18px #1d2327;letter-spacing:0.002999999999999999px;">Search:</div>
<div class="t" style="left:963.6px;top:198.3px;font-size:13px;line-height:13px;color:#646970;font-weight:normal;letter-spacing:-0.12px;">Search</div>
<svg class="b" style="left:1307px;top:200.5px" width="9" height="7" viewBox="0 0 9 7"><path d="M0.5 0.5H8.5L4.5 6.5Z" fill="#787c82"/></svg>
<div class="b" style="left:901px;top:236px;width:430px;height:43px;background:#f6f7f7;border:1px solid #c3c4c7;"></div>
<div class="t" style="left:917.0px;top:253.6px;font-size:12.6px;line-height:12.6px;color:#1d2327;font-weight:normal;-webkit-text-stroke:0.18px #1d2327;letter-spacing:0.31px;">Sidebar Latest Posts:</div>
<div class="t" style="left:1045.8px;top:253.3px;font-size:13px;line-height:13px;color:#646970;font-weight:normal;letter-spacing:0.118px;">Recent Posts</div>
<svg class="b" style="left:1307px;top:255.5px" width="9" height="7" viewBox="0 0 9 7"><path d="M0.5 0.5H8.5L4.5 6.5Z" fill="#787c82"/></svg>
<div class="b" style="left:901px;top:291px;width:430px;height:43px;background:#f6f7f7;border:1px solid #c3c4c7;"></div>
<div class="t" style="left:917.0px;top:308.6px;font-size:12.6px;line-height:12.6px;color:#1d2327;font-weight:normal;-webkit-text-stroke:0.18px #1d2327;letter-spacing:0.29000000000000004px;">Categories:</div>
<div class="t" style="left:988.1px;top:308.3px;font-size:13px;line-height:13px;color:#646970;font-weight:normal;letter-spacing:-0.011px;">Categories</div>
<svg class="b" style="left:1307px;top:310.5px" width="9" height="7" viewBox="0 0 9 7"><path d="M0.5 0.5H8.5L4.5 6.5Z" fill="#787c82"/></svg>
<div class="b" style="left:901px;top:346px;width:430px;height:43px;background:#f6f7f7;border:1px solid #c3c4c7;"></div>
<div class="t" style="left:917.0px;top:363.6px;font-size:12.6px;line-height:12.6px;color:#1d2327;font-weight:normal;-webkit-text-stroke:0.18px #1d2327;letter-spacing:0.32px;">Tag Cloud:</div>
<div class="t" style="left:984.0px;top:363.3px;font-size:13px;line-height:13px;color:#646970;font-weight:normal;letter-spacing:0.1px;">Tag Cloud</div>
<svg class="b" style="left:1307px;top:365.5px" width="9" height="7" viewBox="0 0 9 7"><path d="M0.5 0.5H8.5L4.5 6.5Z" fill="#787c82"/></svg>
<div class="b" style="left:901px;top:401px;width:430px;height:43px;background:#f6f7f7;border:1px solid #c3c4c7;"></div>
<div class="t" style="left:917.0px;top:418.6px;font-size:12.6px;line-height:12.6px;color:#1d2327;font-weight:normal;-webkit-text-stroke:0.18px #1d2327;letter-spacing:0.31px;">Boomdevs Social Profile:</div>
<div class="t" style="left:1068.1px;top:418.3px;font-size:13px;line-height:13px;color:#646970;font-weight:normal;letter-spacing:-0.1px;">Social Link</div>
<svg class="b" style="left:1307px;top:420.5px" width="9" height="7" viewBox="0 0 9 7"><path d="M0.5 0.5H8.5L4.5 6.5Z" fill="#787c82"/></svg>
<div class="b" style="left:881px;top:280px;width:463px;height:60px;border:3px solid #ff0000;border-radius:2px"></div>
<div class="b" style="left:892px;top:467px;width:448px;height:55px;background:#ffffff;border:1px solid #c3c4c7;"></div>
<div class="t" style="left:909.0px;top:489.1px;font-size:16px;line-height:16px;color:#1d2327;font-weight:normal;-webkit-text-stroke:0.4px #1d2327;letter-spacing:0.554px;">Footer Top Widget : Subscribe</div>
<svg class="b" style="left:1307px;top:489.5px" width="9" height="7" viewBox="0 0 9 7"><path d="M0.5 0.5H8.5L4.5 6.5Z" fill="#787c82"/></svg>
<div class="b" style="left:892px;top:534px;width:448px;height:55px;background:#ffffff;border:1px solid #c3c4c7;"></div>
<div class="t" style="left:909.0px;top:556.4px;font-size:16px;line-height:16px;color:#1d2327;font-weight:normal;-webkit-text-stroke:0.4px #1d2327;letter-spacing:0.523px;">Footer Widget Style 1 : About Us</div>
<svg class="b" style="left:1307px;top:556.8333px" width="9" height="7" viewBox="0 0 9 7"><path d="M0.5 0.5H8.5L4.5 6.5Z" fill="#787c82"/></svg>
<div class="b" style="left:892px;top:602px;width:448px;height:55px;background:#ffffff;border:1px solid #c3c4c7;"></div>
<div class="t" style="left:909.0px;top:623.7px;font-size:16px;line-height:16px;color:#1d2327;font-weight:normal;-webkit-text-stroke:0.4px #1d2327;letter-spacing:0.379px;">Footer Widget Style 1 : Links</div>
<svg class="b" style="left:1307px;top:624.1666px" width="9" height="7" viewBox="0 0 9 7"><path d="M0.5 0.5H8.5L4.5 6.5Z" fill="#787c82"/></svg>
<div class="b" style="left:892px;top:669px;width:448px;height:55px;background:#ffffff;border:1px solid #c3c4c7;"></div>
<div class="t" style="left:909.0px;top:691.1px;font-size:16px;line-height:16px;color:#1d2327;font-weight:normal;-webkit-text-stroke:0.4px #1d2327;letter-spacing:0.47px;">Footer Widget Style 1 : Help</div>
<svg class="b" style="left:1307px;top:691.4999px" width="9" height="7" viewBox="0 0 9 7"><path d="M0.5 0.5H8.5L4.5 6.5Z" fill="#787c82"/></svg>
<div class="b" style="left:892px;top:736px;width:448px;height:55px;background:#ffffff;border:1px solid #c3c4c7;"></div>
<div class="t" style="left:909.0px;top:758.4px;font-size:16px;line-height:16px;color:#1d2327;font-weight:normal;-webkit-text-stroke:0.4px #1d2327;letter-spacing:0.354px;">Footer Widget Style 1 : Latest Posts</div>
<svg class="b" style="left:1307px;top:758.8332px" width="9" height="7" viewBox="0 0 9 7"><path d="M0.5 0.5H8.5L4.5 6.5Z" fill="#787c82"/></svg>
<div class="b" style="left:892px;top:804px;width:448px;height:55px;background:#ffffff;border:1px solid #c3c4c7;"></div>
<div class="t" style="left:909.0px;top:825.7px;font-size:16px;line-height:16px;color:#1d2327;font-weight:normal;-webkit-text-stroke:0.4px #1d2327;letter-spacing:0.513px;">Footer Widget Style 1 : Instagram</div>
<svg class="b" style="left:1307px;top:826.1665px" width="9" height="7" viewBox="0 0 9 7"><path d="M0.5 0.5H8.5L4.5 6.5Z" fill="#787c82"/></svg>
<div class="b" style="left:892px;top:871px;width:448px;height:55px;background:#ffffff;border:1px solid #c3c4c7;"></div>
<div class="t" style="left:909.0px;top:893.1px;font-size:16px;line-height:16px;color:#1d2327;font-weight:normal;-webkit-text-stroke:0.4px #1d2327;letter-spacing:0.576px;">Footer Widget Style 2 : CTA Top Widget</div>
<svg class="b" style="left:1307px;top:893.4997999999999px" width="9" height="7" viewBox="0 0 9 7"><path d="M0.5 0.5H8.5L4.5 6.5Z" fill="#787c82"/></svg>
<div class="b" style="left:1362px;top:95px;width:448px;height:55px;background:#ffffff;border:1px solid #c3c4c7;"></div>
<div class="t" style="left:1379.0px;top:117.1px;font-size:16px;line-height:16px;color:#1d2327;font-weight:normal;-webkit-text-stroke:0.4px #1d2327;letter-spacing:0.611px;">Footer Widget Style 2 : Contact Info</div>
<svg class="b" style="left:1777px;top:117.5px" width="9" height="7" viewBox="0 0 9 7"><path d="M0.5 0.5H8.5L4.5 6.5Z" fill="#787c82"/></svg>
<div class="b" style="left:1362px;top:162px;width:448px;height:55px;background:#ffffff;border:1px solid #c3c4c7;"></div>
<div class="t" style="left:1379.0px;top:184.4px;font-size:16px;line-height:16px;color:#1d2327;font-weight:normal;-webkit-text-stroke:0.4px #1d2327;letter-spacing:0.559px;">Footer Widget Style 3 : Subscribe Widget</div>
<svg class="b" style="left:1777px;top:184.8333px" width="9" height="7" viewBox="0 0 9 7"><path d="M0.5 0.5H8.5L4.5 6.5Z" fill="#787c82"/></svg>
<div class="b" style="left:1362px;top:230px;width:448px;height:55px;background:#ffffff;border:1px solid #c3c4c7;"></div>
<div class="t" style="left:1379.0px;top:251.7px;font-size:16px;line-height:16px;color:#1d2327;font-weight:normal;-webkit-text-stroke:0.4px #1d2327;letter-spacing:0.429px;">Footer Widget Style 3 : Latest Posts</div>
<svg class="b" style="left:1777px;top:252.1666px" width="9" height="7" viewBox="0 0 9 7"><path d="M0.5 0.5H8.5L4.5 6.5Z" fill="#787c82"/></svg>
<div class="b" style="left:1362px;top:297px;width:448px;height:55px;background:#ffffff;border:1px solid #c3c4c7;"></div>
<div class="t" style="left:1379.0px;top:319.1px;font-size:16px;line-height:16px;color:#1d2327;font-weight:normal;-webkit-text-stroke:0.4px #1d2327;letter-spacing:0.537px;">Footer Widget Style 3 : Double Links</div>
<svg class="b" style="left:1777px;top:319.49989999999997px" width="9" height="7" viewBox="0 0 9 7"><path d="M0.5 0.5H8.5L4.5 6.5Z" fill="#787c82"/></svg>
<div class="b" style="left:1362px;top:364px;width:448px;height:55px;background:#ffffff;border:1px solid #c3c4c7;"></div>
<div class="t" style="left:1379.0px;top:386.4px;font-size:16px;line-height:16px;color:#1d2327;font-weight:normal;-webkit-text-stroke:0.4px #1d2327;letter-spacing:0.512px;">Footer Widget Style 3 : Office Location 1</div>
<svg class="b" style="left:1777px;top:386.8332px" width="9" height="7" viewBox="0 0 9 7"><path d="M0.5 0.5H8.5L4.5 6.5Z" fill="#787c82"/></svg>
<div class="b" style="left:1362px;top:432px;width:448px;height:55px;background:#ffffff;border:1px solid #c3c4c7;"></div>
<div class="t" style="left:1379.0px;top:453.7px;font-size:16px;line-height:16px;color:#1d2327;font-weight:normal;-webkit-text-stroke:0.4px #1d2327;letter-spacing:0.572px;">Footer Widget Style 3 : Office Location 2</div>
<svg class="b" style="left:1777px;top:454.1665px" width="9" height="7" viewBox="0 0 9 7"><path d="M0.5 0.5H8.5L4.5 6.5Z" fill="#787c82"/></svg>
<div class="b" style="left:1362px;top:499px;width:448px;height:55px;background:#ffffff;border:1px solid #c3c4c7;"></div>
<div class="t" style="left:1379.0px;top:521.1px;font-size:16px;line-height:16px;color:#1d2327;font-weight:normal;-webkit-text-stroke:0.4px #1d2327;letter-spacing:0.572px;">Footer Widget Style 3 : Office Location 3</div>
<svg class="b" style="left:1777px;top:521.4997999999999px" width="9" height="7" viewBox="0 0 9 7"><path d="M0.5 0.5H8.5L4.5 6.5Z" fill="#787c82"/></svg>
<div class="b" style="left:1362px;top:566px;width:448px;height:55px;background:#ffffff;border:1px solid #c3c4c7;"></div>
<div class="t" style="left:1379.0px;top:588.4px;font-size:16px;line-height:16px;color:#1d2327;font-weight:normal;-webkit-text-stroke:0.4px #1d2327;letter-spacing:0.595px;">Footer Widget Style 3 : Office Location 4</div>
<svg class="b" style="left:1777px;top:588.8331px" width="9" height="7" viewBox="0 0 9 7"><path d="M0.5 0.5H8.5L4.5 6.5Z" fill="#787c82"/></svg>
<div class="b" style="left:1362px;top:634px;width:448px;height:55px;background:#ffffff;border:1px solid #c3c4c7;"></div>
<div class="t" style="left:1379.0px;top:655.7px;font-size:16px;line-height:16px;color:#1d2327;font-weight:normal;-webkit-text-stroke:0.4px #1d2327;letter-spacing:0.636px;">Footer Widget Style 3 : Google Map</div>
<svg class="b" style="left:1777px;top:656.1664px" width="9" height="7" viewBox="0 0 9 7"><path d="M0.5 0.5H8.5L4.5 6.5Z" fill="#787c82"/></svg>
<div class="b" style="left:1362px;top:701px;width:448px;height:55px;background:#ffffff;border:1px solid #c3c4c7;"></div>
<div class="t" style="left:1379.0px;top:723.1px;font-size:16px;line-height:16px;color:#1d2327;font-weight:normal;-webkit-text-stroke:0.4px #1d2327;letter-spacing:0.279px;">Service Sidebar</div>
<svg class="b" style="left:1777px;top:723.4997px" width="9" height="7" viewBox="0 0 9 7"><path d="M0.5 0.5H8.5L4.5 6.5Z" fill="#787c82"/></svg>
<div class="b" style="left:1362px;top:768px;width:448px;height:55px;background:#ffffff;border:1px solid #c3c4c7;"></div>
<div class="t" style="left:1379.0px;top:790.4px;font-size:16px;line-height:16px;color:#1d2327;font-weight:normal;-webkit-text-stroke:0.4px #1d2327;letter-spacing:0.738px;">Portfolio Sidebar</div>
<svg class="b" style="left:1777px;top:790.833px" width="9" height="7" viewBox="0 0 9 7"><path d="M0.5 0.5H8.5L4.5 6.5Z" fill="#787c82"/></svg>
<svg class="b" style="left:0;top:0" width="1843" height="922" viewBox="0 0 1843 922"><line x1="320" y1="490.5" x2="80" y2="562" stroke="#ff0000" stroke-width="3" stroke-linecap="round"/><path d="M69.5 566.2 L81.5 557.5 L84.5 566.5Z" fill="#ff0000"/></svg>
</body></html>
